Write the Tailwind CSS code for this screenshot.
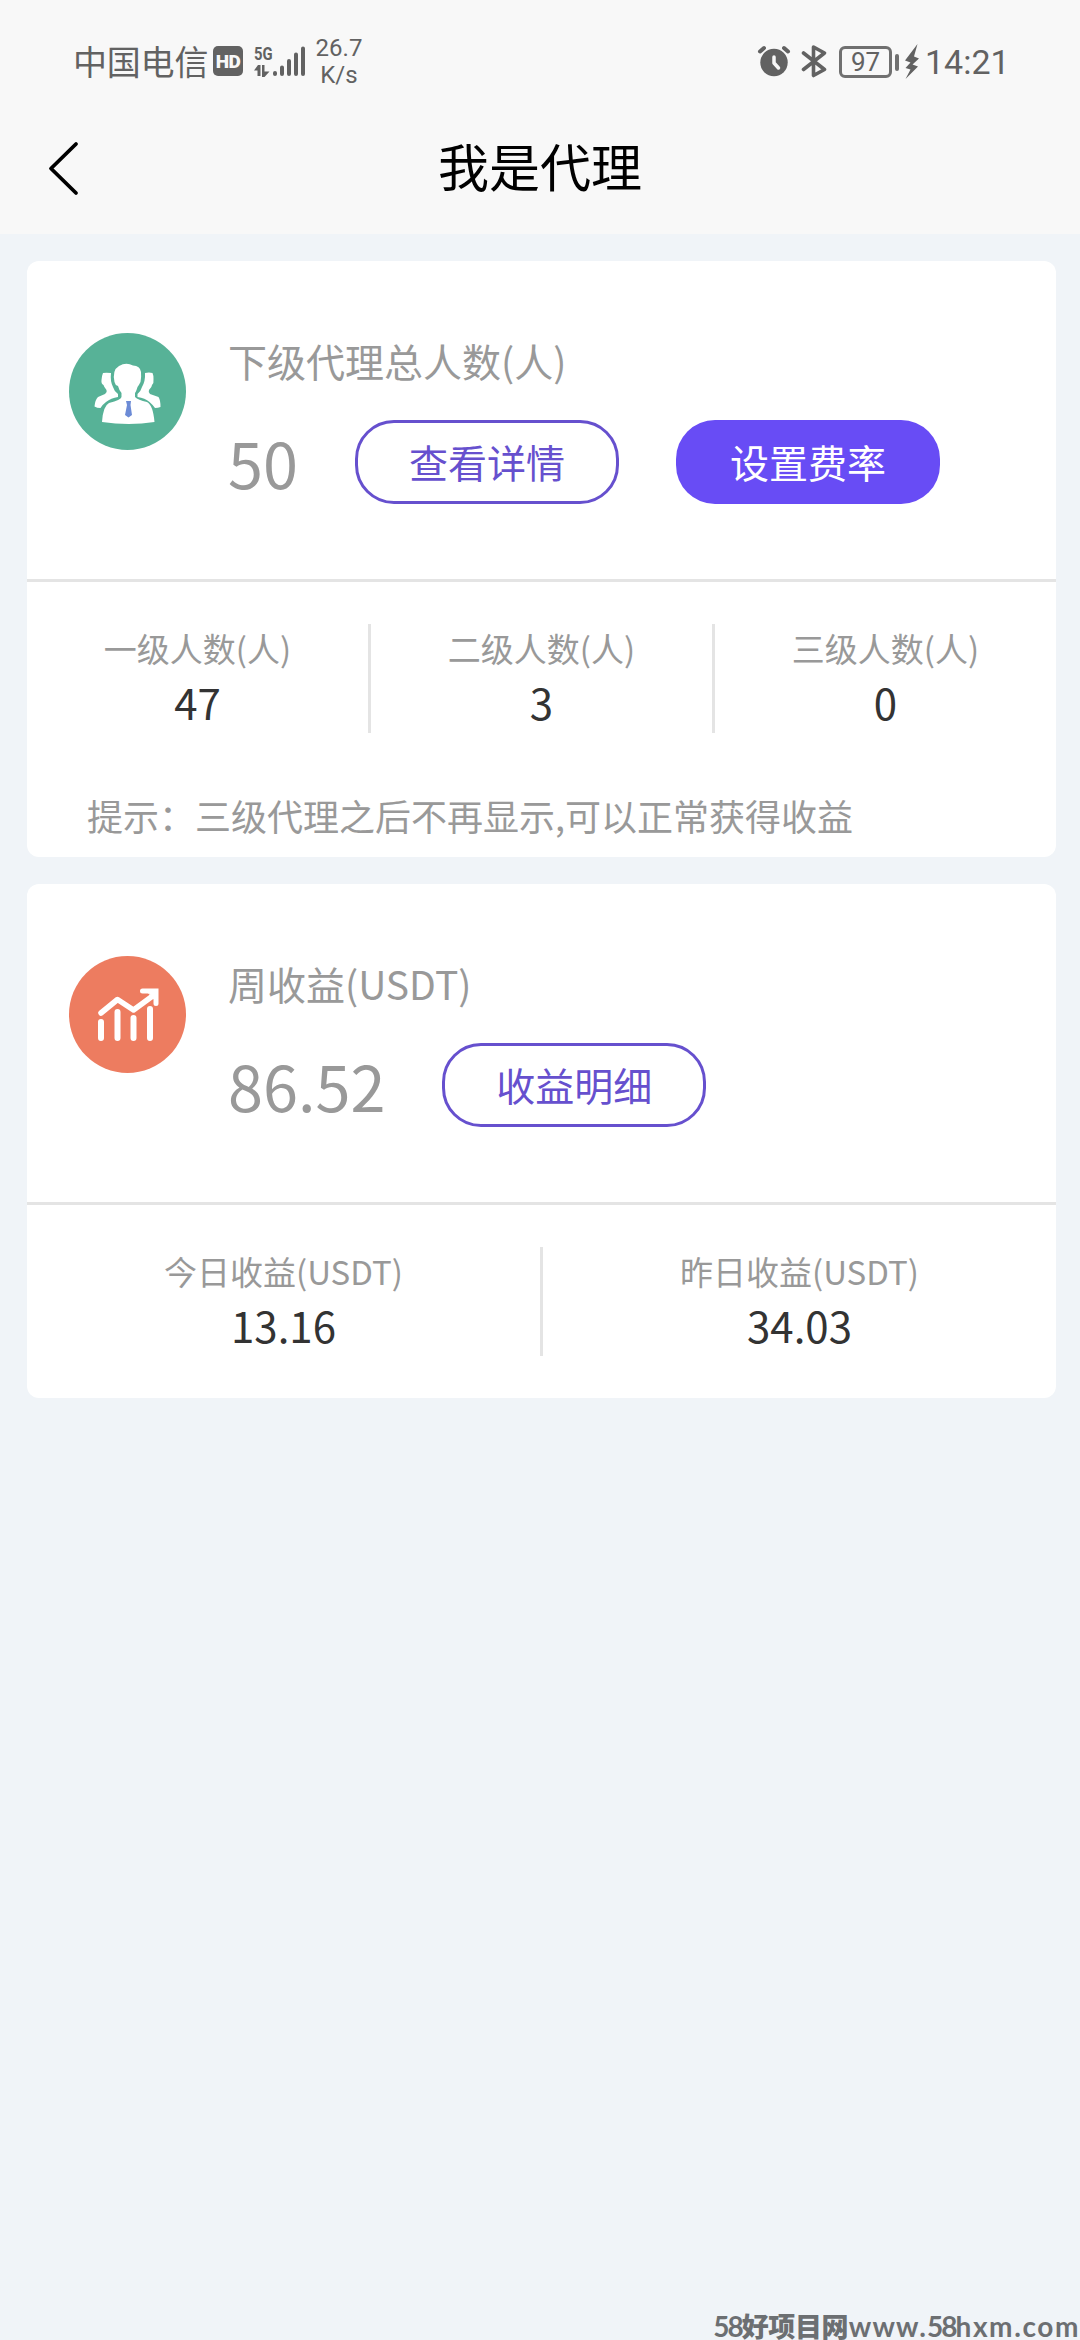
<!DOCTYPE html>
<html lang="zh-CN">
<head>
<meta charset="utf-8">
<title>我是代理</title>
<script src="https://cdn.jsdelivr.net/npm/@tailwindcss/browser@4"></script>
</head>
<body class="flex h-[2340px] w-[1080px] flex-col overflow-hidden bg-[#f0f4f8] font-['Noto_Sans_CJK_SC',sans-serif] text-[#999]">

  <header class="h-[234px] shrink-0 bg-[#f8f8f8]">
    <!-- Status bar -->
    <div class="flex h-[124px] items-center pl-[73px] pr-[73px] text-[#626262]">
      <span class="mt-[-3px] w-[140px] whitespace-nowrap text-[34px] leading-none tracking-[-0.2px]">中国电信</span>
      <span class="mt-[-2px] flex h-[30px] w-[30px] items-center justify-center rounded-[5px] bg-[#626262] font-['Roboto',sans-serif] text-[19px] font-black leading-none tracking-[-0.5px] text-[#f8f8f8]">HD</span>
      <span class="ml-[11px] mt-[-2px] flex h-[32px] w-[19px] flex-col justify-between">
        <span class="origin-left scale-x-[.78] font-['Roboto',sans-serif] text-[19px] font-bold leading-[17px]">5G</span>
        <svg class="h-[12px] w-[16px]" viewBox="0 0 16 12" fill="currentColor"><path d="M4 0H6.500V11H3.500V5.500H0ZM8 0H10.500V6.500H15.500L10.500 12H8Z"/></svg>
      </span>
      <svg class="mt-[-2px] h-[32px] w-[33px]" viewBox="0 0 33 32" stroke="currentColor" stroke-width="4" stroke-linecap="round"><path d="M2 28V29M9 22.500V29M16 16V29M23 9.500V29M30 3.500V29"/></svg>
      <span class="ml-[8px] w-[50px] whitespace-nowrap text-center font-['Roboto',sans-serif] text-[24px] leading-[27px]">26.7<br>K/s</span>
      <span class="flex-1"></span>
      <svg class="h-[40px] w-[34px]" viewBox="756 42 34 40" fill="none" stroke="currentColor" stroke-linecap="round" stroke-linejoin="round">
        <circle cx="773" cy="62.500" r="13.700" fill="currentColor" stroke="none"/>
        <path d="M759 51.500L763 48M787 51.500L783 48" stroke-width="4"/>
        <path d="M773 57V63L777.500 68" stroke="#f8f8f8" stroke-width="3.500"/>
      </svg>
      <svg class="ml-[10px] h-[40px] w-[28px]" viewBox="800 42 28 40" fill="none" stroke="currentColor" stroke-width="3.600" stroke-linecap="round" stroke-linejoin="round"><path d="M802.500 53L823.500 69.500L812.500 75.500V47L823.500 53L802.500 69.500"/></svg>
      <span class="ml-[10px] flex h-[32px] w-[53px] items-center justify-center rounded-[6px] border-3 border-[#707070] font-['Roboto',sans-serif] text-[26px] leading-none">97</span>
      <span class="ml-[3px] h-[17px] w-[4px] rounded-[2px] bg-[#707070]"></span>
      <svg class="ml-[4px] h-[40px] w-[17px]" viewBox="902 42 17 40" fill="currentColor"><path d="M916.500 44L904 60.500L909.500 62.500L904.500 68L909.500 69.500L904.500 79L917 66.500L911.500 64.500L918 58.500L913 56.500Z"/></svg>
      <span class="ml-[5px] w-[82px] whitespace-nowrap font-['Roboto',sans-serif] text-[34px] leading-none">14:21</span>
    </div>
    <!-- Title bar -->
    <div class="grid h-[88px] grid-cols-3 items-center text-black">
      <svg class="ml-[45px] h-[60px] w-[36px]" viewBox="0 0 36 60" fill="none" stroke="currentColor" stroke-width="3.800" stroke-linecap="round" stroke-linejoin="round"><path d="M31 6L6 30.500L31 55"/></svg>
      <h1 class="mt-[-6px] text-center text-[51px] leading-[88px]">我是代理</h1>
    </div>
  </header>

  <main class="flex flex-col gap-[27px] px-[27px] pt-[27px] pr-[24px]">
    <!-- Agents -->
    <section class="h-[596px] rounded-[12px] bg-white">
      <div class="flex h-[321px] border-b-3 border-[#e4e4e4] pl-[42px] pt-[72px]">
        <svg class="size-[117px]" viewBox="0 0 117 117">
          <circle cx="58.500" cy="58.500" r="58.500" fill="#57b297"/>
          <g fill="#fff">
            <path d="M34 40Q37 39.500 42 40Q41 48 44 54Q45 58 49 61V64Q42 65 37 69Q33 72 31.500 75Q28 75 25.500 73.500Q26 67 29 64L36 61Q38.500 59 37.500 57Q35 54 34.500 52Q32 51 32.500 47Q33 42 34 40Z"/>
            <path d="M83.500 40Q80 39 76 40Q76.500 48 73 54Q72 58 68.500 61V64Q76 65 80.500 69Q84 72 86 75Q89 75 91.500 74Q91.500 67 89.500 64L81 61Q79 59 80 57Q83 54 83 52Q85 50 84.500 46Q84.500 42 83.500 40Z"/>
            <path d="M45.500 49Q43 37 50 33Q57 29 64 32.500Q71 32.500 72 39Q72.500 44 71.500 49Q70 52 68.500 54Q67 59 66 60V64Q69 67 78 69Q84 72 85.500 89Q60 93 33 89Q34 73 40 70Q52 67 52.500 64V60Q50 57 49 53Q46 52 45.500 49Z"/>
          </g>
          <path d="M57 68H62L61.500 72L63 82L59.500 84.500L56 82L58 72Z" fill="#6c8bd6"/>
        </svg>
        <div class="ml-[42px] mt-[-3px]">
          <p class="text-[39px] leading-[60px]">下级代理总人数(人)</p>
          <div class="mt-[30px] flex h-[84px]">
            <span class="text-[63px] leading-[83px]">50</span>
            <button class="ml-[57px] w-[264px] rounded-[39px] border-3 border-[#6650ce] text-[39px] leading-[76px] text-[#6650ce]"><span class="block h-[78px]">查看详情</span></button>
            <button class="ml-[57px] w-[264px] rounded-[39px] bg-[#684cf5] text-[39px] leading-[82px] text-white"><span class="block h-[84px]">设置费率</span></button>
          </div>
        </div>
      </div>
      <div class="mt-[42px] flex h-[109px] text-center">
        <div class="mt-[-1px] flex-1"><p class="text-[33px] leading-[50px]">一级人数(人)</p><p class="text-[42px] leading-[58px] text-[#333]">47</p></div>
        <i class="w-[3px] bg-[#e4e4e4]"></i>
        <div class="mt-[-1px] flex-1"><p class="text-[33px] leading-[50px]">二级人数(人)</p><p class="text-[42px] leading-[58px] text-[#333]">3</p></div>
        <i class="w-[3px] bg-[#e4e4e4]"></i>
        <div class="mt-[-1px] flex-1"><p class="text-[33px] leading-[50px]">三级人数(人)</p><p class="text-[42px] leading-[58px] text-[#333]">0</p></div>
      </div>
      <p class="ml-[60px] mt-[55px] text-[36px] leading-[54px]">提示：三级代理之后不再显示,可以正常获得收益</p>
    </section>

    <!-- Earnings -->
    <section class="h-[514px] rounded-[12px] bg-white">
      <div class="flex h-[321px] border-b-3 border-[#e4e4e4] pl-[42px] pt-[72px]">
        <svg class="size-[117px]" viewBox="0 0 117 117">
          <circle cx="58.500" cy="58.500" r="58.500" fill="#ed7c60"/>
          <g fill="none" stroke="#fff" stroke-linecap="round">
            <path d="M32 57L48.500 43.500L64.500 54L85 39" stroke-width="5.500" stroke-linejoin="round"/>
            <path d="M73.500 35H87V47.500" stroke-width="5"/>
            <path d="M80 37L87 35V45Z" fill="#fff" stroke-width="1"/>
            <path d="M32 66V82M48.500 56V82M64.500 62V82M81 53V82" stroke-width="6"/>
          </g>
        </svg>
        <div class="ml-[42px] mt-[-3px]">
          <p class="text-[39px] leading-[60px]">周收益(USDT)</p>
          <div class="mt-[30px] flex h-[84px]">
            <span class="text-[63px] leading-[83px]">86.52</span>
            <button class="ml-[57px] w-[264px] rounded-[39px] border-3 border-[#6650ce] text-[39px] leading-[76px] text-[#6650ce]"><span class="block h-[78px]">收益明细</span></button>
          </div>
        </div>
      </div>
      <div class="mt-[42px] flex h-[109px] text-center">
        <div class="mt-[-1px] flex-1"><p class="text-[33px] leading-[50px]">今日收益(USDT)</p><p class="text-[42px] leading-[58px] text-[#333]">13.16</p></div>
        <i class="w-[3px] bg-[#e4e4e4]"></i>
        <div class="mt-[-1px] flex-1"><p class="text-[33px] leading-[50px]">昨日收益(USDT)</p><p class="text-[42px] leading-[58px] text-[#333]">34.03</p></div>
      </div>
    </section>
  </main>

  <!-- Site mark -->
  <footer class="mt-auto flex h-[29px] justify-end whitespace-nowrap text-[27px] font-bold leading-[30px] text-[#6c6f72]">
    <span class="font-['Lato',sans-serif] text-[28px] tracking-[-2px]">58</span><span class="w-[107px] font-black tracking-[-0.4px]">好项目网</span><span class="font-['Lato',sans-serif] text-[28px] tracking-[1.2px]">www.</span><span class="font-['Lato',sans-serif] text-[28px] tracking-[-2px]">58</span><span class="font-['Lato',sans-serif] text-[28px] tracking-[1.6px]">hxm.com</span>
  </footer>
</body>
</html>
